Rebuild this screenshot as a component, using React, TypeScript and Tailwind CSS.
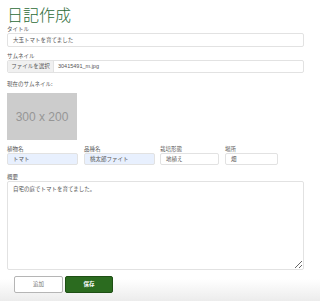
import React from "react";

const font = { fontFamily: '"Noto Sans CJK JP", "Noto Sans", sans-serif' };

function Label({ children, className = "" }: { children: React.ReactNode; className?: string }) {
  return <div className={`text-[5.5px] leading-[8px] text-[#555] ${className}`}>{children}</div>;
}

function Field({ value, w, blue, h = "h-[12px]" }: { value: string; w: string; blue?: boolean; h?: string }) {
  return (
    <div
      className={`${w} ${h} flex items-center rounded-[2px] border border-[#e2e2e2] px-[5px] text-[5.5px] text-[#555] ${
        blue ? "bg-[#e8f0fe]" : "bg-white"
      }`}
    >
      {value}
    </div>
  );
}

export default function App() {
  return (
    <div className="relative w-[320px] h-[301px] overflow-hidden bg-white" style={font}>
      <div className="absolute left-0 right-0 bottom-0 h-[22px] bg-gradient-to-b from-white to-[#ececec]" />
      <div className="relative px-[7px] pt-[4px] flex flex-col">
        <h1 className="text-[16px] leading-[20px] text-[#2c6b36] font-light">日記作成</h1>
        <Label className="mt-[1px]">タイトル</Label>
        <Field value="大玉トマトを育てました" w="w-[297px]" h="h-[14px]" />
        <Label className="mt-[5px]">サムネイル</Label>
        <div className="w-[297px] h-[13px] flex items-stretch rounded-[2px] border border-[#e2e2e2] text-[5.5px] text-[#555] overflow-hidden">
          <div className="w-[46px] bg-[#f0f0f0] border-r border-[#e2e2e2] flex items-center justify-center">ファイルを選択</div>
          <div className="flex items-center pl-[4px]" style={{ fontFamily: '"Liberation Sans", sans-serif' }}>30415491_m.jpg</div>
        </div>
        <Label className="mt-[7px]">現在のサムネイル:</Label>
        <div
          className="mt-[5px] w-[70px] h-[47px] bg-[#cccccc] flex items-center justify-center text-[12px] text-[#969696]"
          style={{ fontFamily: '"Liberation Sans", sans-serif' }}
        >
          300 x 200
        </div>
        <div className="mt-[5px] flex">
          <div className="w-[77px]">
            <Label>植物名</Label>
            <Field value="トマト" w="w-[71px]" blue />
          </div>
          <div className="w-[76px]">
            <Label>品種名</Label>
            <Field value="桃太郎ファイト" w="w-[71px]" blue />
          </div>
          <div className="w-[65px]">
            <Label>栽培形態</Label>
            <Field value="地植え" w="w-[59px]" />
          </div>
          <div>
            <Label>場所</Label>
            <Field value="畑" w="w-[53px]" />
          </div>
        </div>
        <Label className="mt-[8px]">概要</Label>
        <textarea
          readOnly
          defaultValue="自宅の庭でトマトを育てました。"
          className="w-[297px] h-[89px] rounded-[2px] border border-[#e2e2e2] bg-white px-[5px] py-[3px] text-[5.5px] leading-[8px] text-[#555] outline-none"
          style={font}
        />
        <div className="mt-[6px] ml-[7px] flex gap-[2px]">
          <div className="w-[49px] h-[17px] rounded-[2px] border border-[#b5b5b5] bg-white flex items-center justify-center text-[5.5px] text-[#777]">
            追加
          </div>
          <div className="w-[48px] h-[17px] rounded-[2px] border border-[#1e4f14] bg-[#2b6b1f] flex items-center justify-center text-[5.5px] text-white font-bold">
            保存
          </div>
        </div>
      </div>
    </div>
  );
}
